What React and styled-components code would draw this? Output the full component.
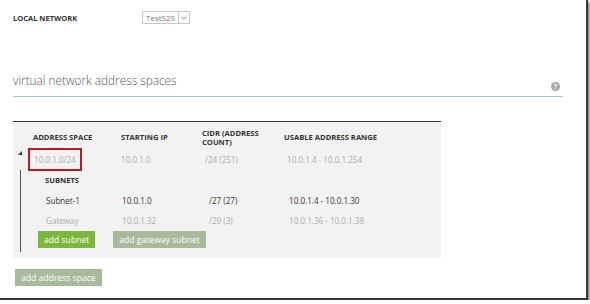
import React from "react";
import styled, { createGlobalStyle } from "styled-components";

const Global = createGlobalStyle`
  html, body {
    margin: 0;
    padding: 0;
    background: #ffffff;
  }
  body {
    font-family: "Open Sans", "Noto Sans", sans-serif;
    color: #333;
  }
`;

const Frame = styled.div`
  width: 588px;
  height: 300px;
  box-sizing: border-box;
  background: #fff;
  border-right: 2px solid #3a3a3a;
  border-bottom: 2px solid #3a3a3a;
  box-shadow: 2px 2px 2px rgba(0, 0, 0, 0.45);
  padding: 10px 0 0 13px;
  display: flex;
  flex-direction: column;
`;

const FieldRow = styled.div`
  display: flex;
  align-items: center;
  height: 15px;
`;

const FieldLabel = styled.div`
  width: 129px;
  font-size: 7.5px;
  font-weight: 700;
  color: #333;
  text-transform: uppercase;
`;

const Select = styled.div`
  display: flex;
  align-items: stretch;
  height: 13px;
`;

const SelectValue = styled.div`
  border: 1px solid #c8c8c8;
  padding: 0 3px;
  font-size: 8px;
  color: #777;
  display: flex;
  align-items: center;
`;

const SelectArrow = styled.div`
  width: 10px;
  border: 1px solid #c8c8c8;
  border-left: none;
  display: flex;
  align-items: center;
  justify-content: center;
`;

const SectionTitle = styled.div`
  margin-top: 47px;
  width: 550px;
  display: flex;
  align-items: flex-end;
  justify-content: space-between;
  border-bottom: 1px solid #9cc4ea;
  padding-bottom: 8px;
`;

const TitleText = styled.span`
  font-size: 11.8px;
  color: #555;
  font-weight: 300;
`;

const Help = styled.span`
  width: 9px;
  height: 9px;
  border-radius: 50%;
  background: #a8a8a8;
  color: #fff;
  font-size: 7px;
  font-weight: 700;
  line-height: 9px;
  text-align: center;
  margin-right: 3px;
  margin-bottom: -3px;
`;

const Panel = styled.div`
  margin-top: 24px;
  width: 428px;
  box-sizing: border-box;
  background: #f2f2f2;
  border-top: 1.5px solid #333;
  padding: 5px 0 6px 20px;
  display: flex;
  flex-direction: column;
`;

const Grid = styled.div`
  display: grid;
  grid-template-columns: ${(p) => p.$cols};
  align-items: center;
`;

const Head = styled.div`
  font-size: 7.6px;
  font-weight: 700;
  color: #333;
  text-transform: uppercase;
  line-height: 9px;
  height: 21px;
  display: flex;
  align-items: center;
`;

const Cell = styled.div`
  position: relative;
  font-size: 8.1px;
  height: ${(p) => p.$h || 20}px;
  display: flex;
  align-items: center;
  color: ${(p) => (p.$dim ? "#acacac" : "#333")};
  padding-left: ${(p) => p.$indent || 0}px;
`;

const Boxed = styled.span`
  border: 2px solid #c0181e;
  padding: 4px 4px;
  margin-left: -5px;
`;

const Expander = styled.span`
  position: absolute;
  left: -15px;
  top: 3px;
  width: 0;
  height: 0;
  border-left: 4px solid transparent;
  border-bottom: 4px solid #333;
`;

const SubnetBlock = styled.div`
  margin-left: -13px;
  border-left: 1.5px solid #555;
  display: flex;
  flex-direction: column;
  padding-bottom: 4px;
`;

const SubLabel = styled.div`
  font-size: 7.6px;
  font-weight: 700;
  color: #333;
  padding-left: 24px;
  height: 20px;
  display: flex;
  align-items: center;
`;

const Buttons = styled.div`
  display: flex;
  gap: 18px;
  padding-left: 17px;
  margin-top: 1px;
`;

const Button = styled.div`
  background: ${(p) => (p.$primary ? "#7db63c" : "#a8b99c")};
  color: #fff;
  font-size: 8.6px;
  height: 17px;
  padding: 0 6px;
  display: flex;
  align-items: center;
  margin-left: ${(p) => p.$offset || 0}px;
  align-self: flex-start;
`;

const Footer = styled.div`
  margin-top: 11px;
  display: flex;
`;

const subCols = "101px 86px 80px 1fr";

export default function App() {
  return (
    <>
      <Global />
      <Frame>
        <FieldRow>
          <FieldLabel>Local Network</FieldLabel>
          <Select>
            <SelectValue>TestS2S</SelectValue>
            <SelectArrow>
              <svg width="6" height="4" viewBox="0 0 6 4">
                <path d="M0.5 0.5 L3 3 L5.5 0.5" fill="none" stroke="#888" strokeWidth="0.9" />
              </svg>
            </SelectArrow>
          </Select>
        </FieldRow>

        <SectionTitle>
          <TitleText>virtual network address spaces</TitleText>
          <Help>?</Help>
        </SectionTitle>

        <Panel>
          <Grid $cols="88px 81px 82px 1fr">
            <Head>Address Space</Head>
            <Head>Starting IP</Head>
            <Head>
              CIDR (Address
              <br />
              Count)
            </Head>
            <Head>Usable Address Range</Head>

            <Cell $dim $h={22}>
              <Expander />
              <Boxed>10.0.1.0/24</Boxed>
            </Cell>
            <Cell $dim $h={22}>10.0.1.0</Cell>
            <Cell $dim $h={22} $indent={3}>/24 (251)</Cell>
            <Cell $dim $h={22} $indent={3}>10.0.1.4 - 10.0.1.254</Cell>
          </Grid>

          <SubnetBlock>
            <SubLabel>SUBNETS</SubLabel>
            <Grid $cols={subCols}>
              <Cell $indent={25}>Subnet-1</Cell>
              <Cell>10.0.1.0</Cell>
              <Cell $indent={1}>/27 (27)</Cell>
              <Cell $indent={1}>10.0.1.4 - 10.0.1.30</Cell>

              <Cell $dim $indent={25}>Gateway</Cell>
              <Cell $dim>10.0.1.32</Cell>
              <Cell $dim $indent={1}>/29 (3)</Cell>
              <Cell $dim $indent={1}>10.0.1.36 - 10.0.1.38</Cell>
            </Grid>
            <Buttons>
              <Button $primary>add subnet</Button>
              <Button>add gateway subnet</Button>
            </Buttons>
          </SubnetBlock>
        </Panel>

        <Footer>
          <Button $offset={2}>add address space</Button>
        </Footer>
      </Frame>
    </>
  );
}
